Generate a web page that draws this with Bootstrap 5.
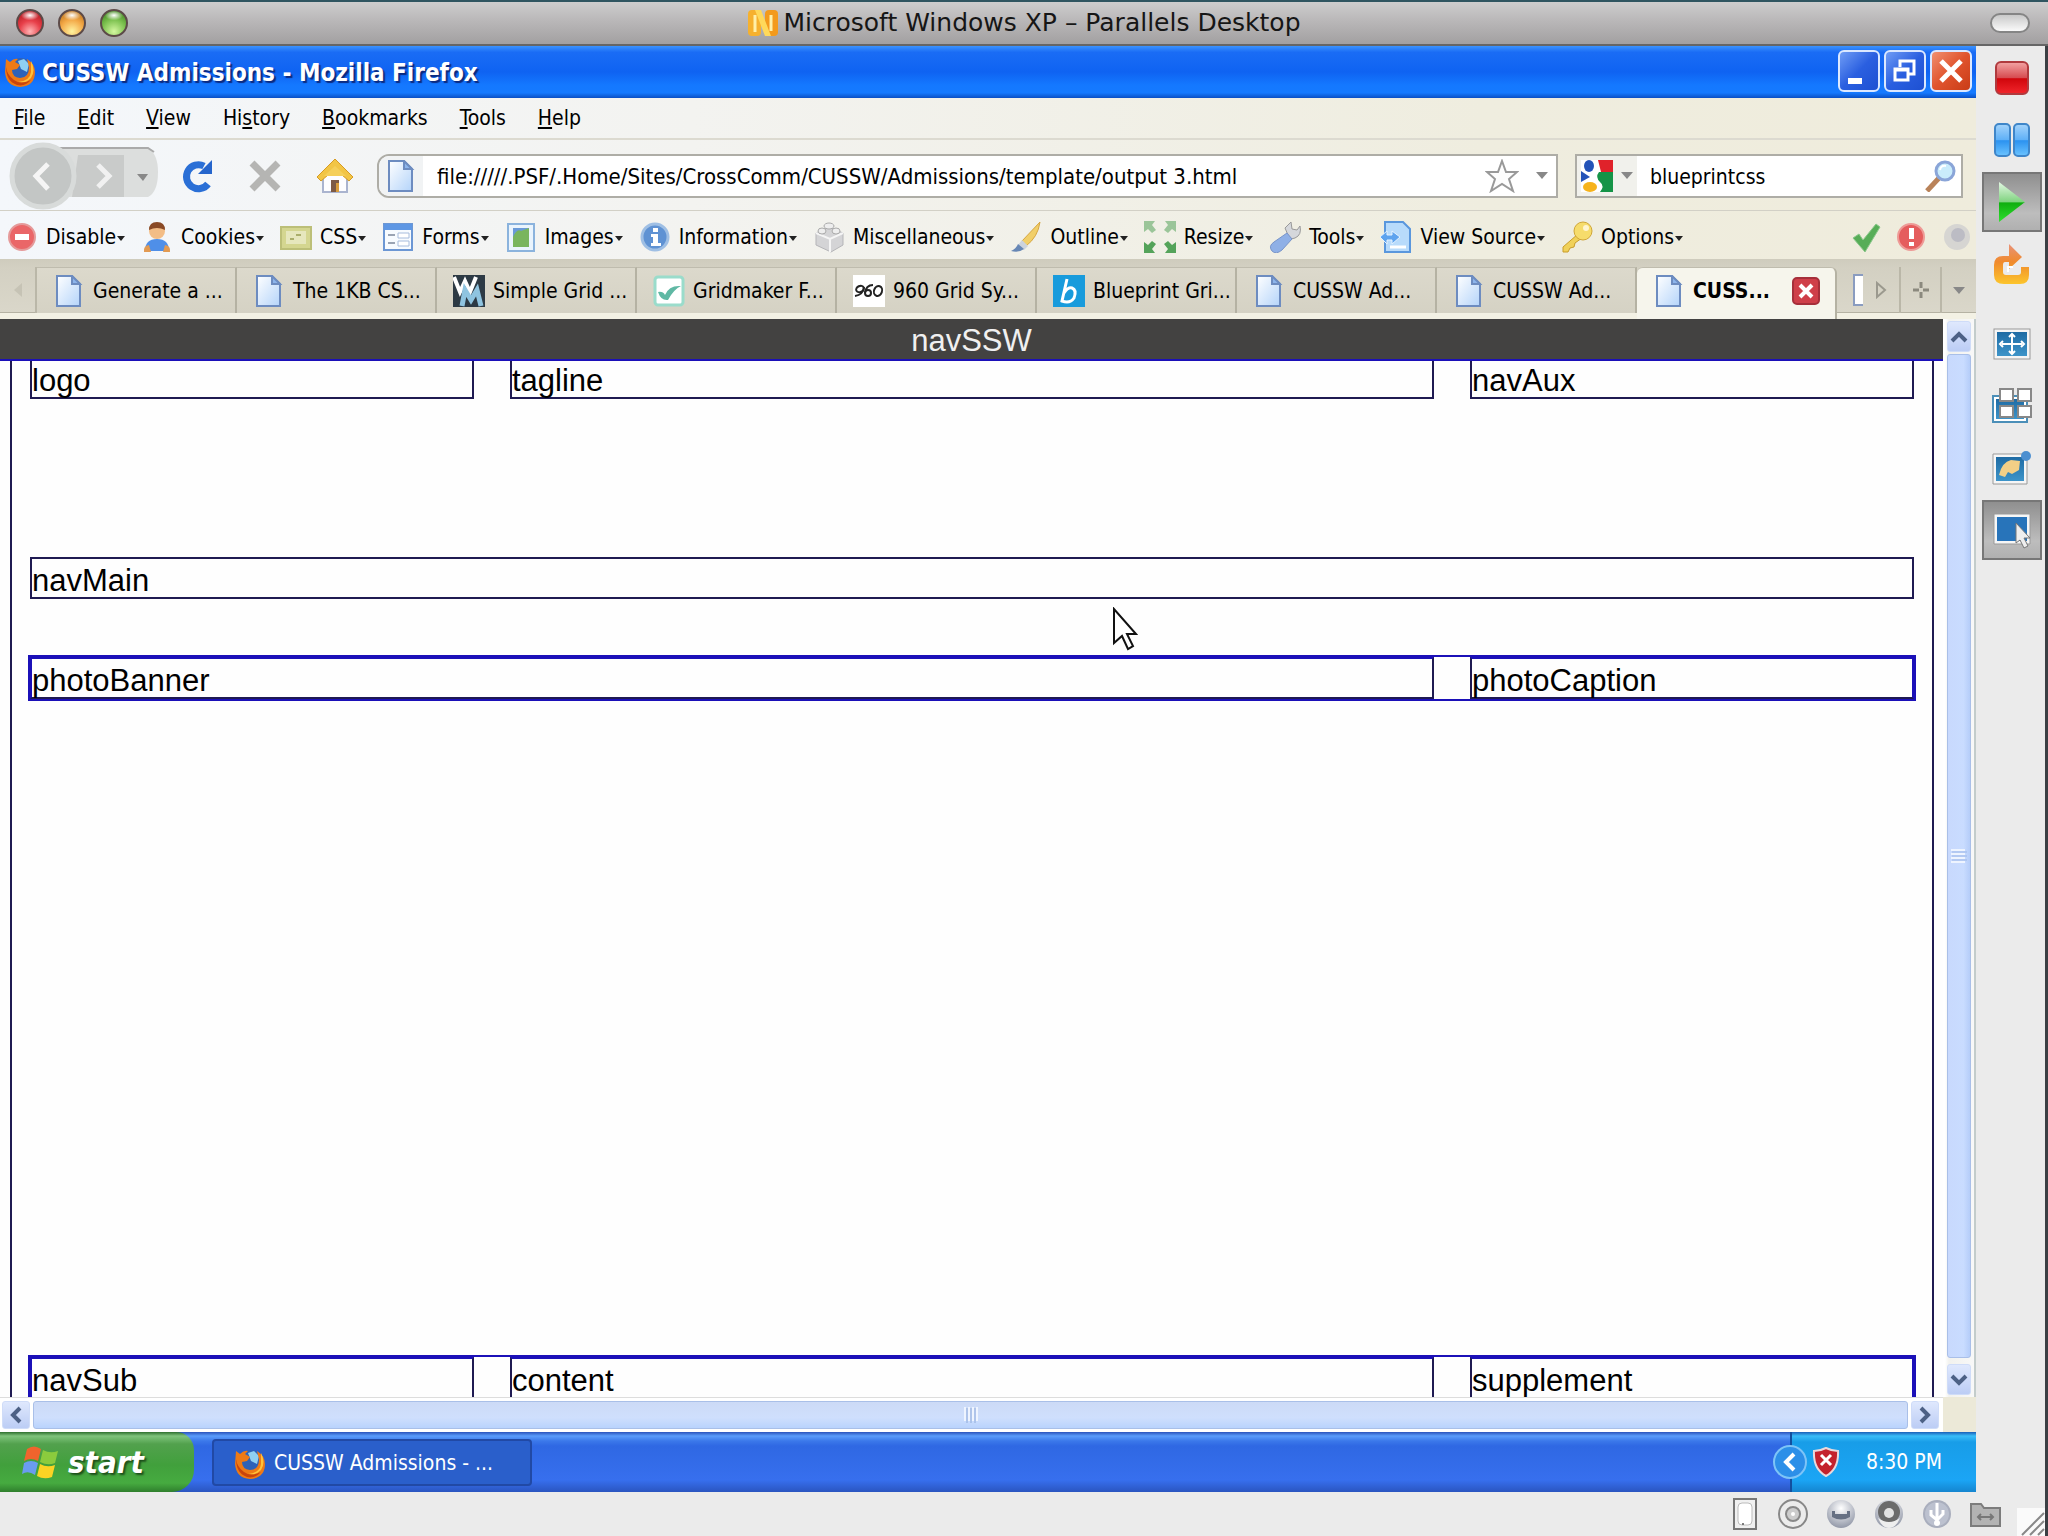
<!DOCTYPE html>
<html lang="en">
<head>
<meta charset="utf-8">
<meta name="viewport" content="width=device-width, initial-scale=1">
<title>Microsoft Windows XP – Parallels Desktop</title>
<link rel="stylesheet" href="https://cdn.jsdelivr.net/npm/bootstrap@5.3.0/dist/css/bootstrap.min.css">
<style>
:root{--ui:"DejaVu Sans Condensed","DejaVu Sans",sans-serif;--blue:#1b10b8;--navy:#1f1a52}
body{font-family:var(--ui);font-size:21px;line-height:24px;color:#000;background:#ebebeb;overflow:hidden}
button{border:0;background:none;padding:0;color:inherit;font:inherit}
svg{display:block;flex:none}
.ico{width:32px;height:32px}
.mac-bar{height:46px;border-top:2px solid #2f5560;border-bottom:2px solid #666;background:linear-gradient(#cdcdcd,#b9b7b8 45%,#a2a0a1);font-family:"DejaVu Sans",sans-serif;font-size:25px;color:#161616}
.lights{padding-left:16px;gap:14px;width:160px}
.lamp{width:28px;height:28px;border-radius:50%;border:2px solid #5c4a48}
.lamp-r{background:radial-gradient(ellipse 9px 5px at 50% 18%,#fff,#fff0),radial-gradient(circle at 50% 85%,#ffb5b5,#e8404a 45%,#a30f14)}
.lamp-y{background:radial-gradient(ellipse 9px 5px at 50% 18%,#fff,#fff0),radial-gradient(circle at 50% 85%,#fff3a0,#f3a846 50%,#a9620f)}
.lamp-g{background:radial-gradient(ellipse 9px 5px at 50% 18%,#fff,#fff0),radial-gradient(circle at 50% 85%,#d4f7a0,#7cc14f 50%,#2f7314)}
.pill{width:40px;height:20px;border:2px solid #858585;border-radius:10px;background:linear-gradient(#c9c9c9,#fafafa);margin-right:18px}
.xp-title{height:52px;padding:0 4px 2px;gap:4px;background:linear-gradient(#3b93ff,#1a6cf5 12%,#0f63f2 50%,#1478ff 75%,#157aff 90%,#0a4fc4);color:#fff;font-weight:bold;font-size:24px;text-shadow:2px 2px 1px #0b2a80}
.xp-title span{padding:4px 0 0 2px}
.cap-btn{width:42px;height:42px;border:2px solid #dbe8ff;border-radius:6px;background:linear-gradient(135deg,#6f9cf5,#2a5fe0 50%,#1d50d2)}
.cap-close{background:linear-gradient(135deg,#f0906f,#e0532d 50%,#c93c17)}
.chrome-bg{background:linear-gradient(90deg,#f4f7fb,#f3f3f0 35%,#efeddf 75%,#efecdc)}
.menu-line{height:42px;padding:0 14px;gap:32px;border-bottom:2px solid #dcdad0}
.nav-line{height:71px;border-bottom:1px solid #d2d0c6;padding:2px 13px 0 0}
.nav-btns{gap:35px;padding-left:21px}
.dev-line{height:49px;padding:5px 4px 0 6px;gap:16px}
.dev-line button{display:flex;align-items:center;gap:8px}
.dev-state{gap:13px}
.tri{width:0;height:0;border:4px solid transparent;border-top:5px solid #222;border-bottom:0;display:inline-block;vertical-align:middle;margin-left:1px}
.tri-lg{border-width:6px;border-top:7px solid #888;border-bottom:0}
.field{height:44px;border:2px solid #aeada6;background:#fff}
.field input{border:0;outline:0;background:none;font:inherit;color:#000;padding:2px 0 0;min-width:0}
.field .addr-text{font-size:22px}
.url-field{border-radius:12px 0 0 12px;margin-left:24px;margin-right:17px}
.url-ico{width:44px;height:100%;background:#f1f3f4;border-radius:10px 0 0 10px;margin-right:14px}
.srch-field{width:388px}
.srch-ico{width:60px;height:100%;background:#f1f1ec;margin-right:13px}
.tab-line{height:60px;background:linear-gradient(#cfccbd,#d3d0c2 8px,#dad7ca);border-bottom:6px solid #f3f1e4;box-shadow:inset 0 -1px #b5b2a3;padding-top:8px}
.tab-end{width:37px;border-right:2px solid #bab7a8;color:#aaa}
.tb{width:200px;gap:8px;padding-left:16px;border-right:2px solid #b5b2a3;border-top:1px solid #bfbcae;background:linear-gradient(#dcd9cc,#d5d2c4);white-space:nowrap}
.tb-on{background:#f6f5ec;height:52px;border-radius:6px 6px 0 0;font-weight:bold;padding-bottom:6px}
.tb-close{margin-left:14px}
.tab-ctl{border-left:2px solid #bab7a8;color:#8b897e}
.viewport{font-family:"Liberation Sans",Arial,sans-serif;font-size:31px;line-height:33px;background:#fefefe}
.ssw{height:42px;padding-top:5px;background:#434241;border-bottom:2px solid var(--blue);color:#f0f0f0}
.sheet{margin:0 9px 0 10px;border:2px solid var(--navy);border-width:0 2px;padding:0 18px}
.cols{display:grid;grid-template-columns:444fr 924fr 444fr;column-gap:36px}
.cols-2{grid-template-columns:1404fr 444fr}
.cell{border:2px solid var(--navy);padding-top:5px}
.head-zone{height:196px}
.head-zone .cell{border-top:0;padding-top:3px}
.main-zone{height:98px}
.wrapbox{border:2px solid var(--blue);margin:0 -2px}
.wrapbox .cell{border-top-color:var(--blue)}
.wrapbox .cell:first-child{border-left-color:var(--blue)}
.wrapbox .cell:last-child{border-right-color:var(--blue)}
.photo-zone{height:700px}
.vbar{width:33px;background:linear-gradient(90deg,#fff 2px,#f2f2ee 6px,#f8f8f8);padding:2px 3px 2px 4px;gap:2px;border-right:2px solid #c3cccb}
.hbar{height:35px;background:#fff;padding:3px 4px 3px 2px;gap:3px;border-top:1px solid #ddd}
.sb-btn{background:linear-gradient(#dfe8fd,#bccdf5);border:1px solid #cfdcf8;border-radius:3px;display:flex;align-items:center;justify-content:center}
.vbar .sb-btn{height:31px}
.hbar .sb-btn{width:28px}
.vthumb{background:linear-gradient(90deg,#c8d9fd,#c9dcff 70%,#b5cdf9);border:1px solid #a9bfe8;border-radius:3px}
.hthumb{background:linear-gradient(#ccdaf6,#cfdffd 60%,#b9d3fd);border:1px solid #a9bfe8;border-radius:3px}
.corner{width:33px;background:#ece9d8}
.taskbar{height:60px;background:linear-gradient(#2a52bb,#5a9cfb 4px,#3b78ea 9px,#2f68e3 14px,#376fee 80%,#2a55c0)}
.start{width:194px;border-radius:0 18px 22px 0;background:linear-gradient(#2e6f2e,#7fc47c 4px,#52a14d 12px,#41a03c 55%,#46ab40 85%,#2f7f2d);color:#fff;font-weight:bold;font-style:italic;font-size:31px;text-shadow:2px 2px 2px #1d4f1b;padding-left:22px;gap:8px}
.task{width:320px;height:47px;margin-left:18px;border:2px solid #2149a5;border-radius:4px;background:#2a5fcb;color:#fff;padding:2px 0 0 20px;gap:8px}
.tray{width:186px;background:linear-gradient(#1a5fb8,#39bdf8 4px,#189de8 10px,#1ba5f5 80%,#1585cf);border-left:2px solid #134f9e;color:#fff;padding-right:34px}
.tray-knob{margin-left:-20px}
.side{width:72px;border-right:3px solid #3b3f44;background:#ebebeb;padding:2px 3px 0 6px;gap:2px}
.side button{height:60px;width:60px;display:flex;align-items:center;justify-content:center}
.pressed{border:2px solid #777!important;background:linear-gradient(#8f8f8f,#bdbdbd 70%,#b0b0b0)!important}
.group-gap{margin-top:18px}
.foot{height:44px;border-right:3px solid #3b3f44;gap:16px}
.pointer{position:absolute;left:57.25%;top:288px;width:26px;height:44px}
</style>
</head>
<body>
<svg width="0" height="0" class="position-absolute" aria-hidden="true">
<defs>
<linearGradient id="gPage" x1="0" y1="0" x2="1" y2="1"><stop offset="0" stop-color="#fff"/><stop offset="1" stop-color="#b4d4fa"/></linearGradient>
<linearGradient id="gRed" x1="0" y1="0" x2="0" y2="1"><stop offset="0" stop-color="#f3a5a5"/><stop offset=".5" stop-color="#d64a4f"/><stop offset=".52" stop-color="#d0060c"/><stop offset="1" stop-color="#f2262c"/></linearGradient>
<linearGradient id="gBlue" x1="0" y1="0" x2="0" y2="1"><stop offset="0" stop-color="#a5d4fb"/><stop offset=".5" stop-color="#5eb0f7"/><stop offset=".52" stop-color="#2b92f0"/><stop offset="1" stop-color="#6cc4ff"/></linearGradient>
<linearGradient id="gGreen" x1="0" y1="0" x2="0" y2="1"><stop offset="0" stop-color="#e4f8e4"/><stop offset=".5" stop-color="#7fd37f"/><stop offset=".52" stop-color="#0fae0f"/><stop offset="1" stop-color="#2fe02f"/></linearGradient>
<linearGradient id="gOrange" x1="0" y1="0" x2="0" y2="1"><stop offset="0" stop-color="#e8937a"/><stop offset=".45" stop-color="#f08a2c"/><stop offset="1" stop-color="#fcc52c"/></linearGradient>
<linearGradient id="gScr" x1="0" y1="0" x2="0" y2="1"><stop offset="0" stop-color="#1e6ba4"/><stop offset="1" stop-color="#3d94c9"/></linearGradient>
<radialGradient id="gBall" cx=".5" cy=".3" r=".7"><stop offset="0" stop-color="#fff"/><stop offset="1" stop-color="#9298a8"/></radialGradient>
<symbol id="page" viewBox="0 0 32 32"><path d="M4 1h15l8 8v22H4z" fill="url(#gPage)" stroke="#6d8cc0" stroke-width="2"/><path d="M19 1v8h8z" fill="#8db5ec" stroke="#6d8cc0" stroke-width="2"/></symbol>
<symbol id="fox" viewBox="0 0 32 32"><circle cx="17" cy="14" r="11" fill="#2e62b8"/><path d="M14 6l6-2 5 5-2 8-6-3z" fill="#8fd0f2"/><path d="M2 4l4 3q4-4 8-3l-3 3 5 3-3 4-5 1q0 7 8 8 9 0 9-11l-2-8q8 5 8 13 0 14-15 15Q2 31 1 17z" fill="#ee7a16"/><path d="M27 6q5 9 0 17-6 6-13 4 12-1 13-10z" fill="#ffc33a"/><path d="M2 12q0 14 11 18 8 2 14-5-10 5-17 0-7-5-8-13z" fill="#c9440c"/></symbol>
</defs></svg>

<div class="d-flex flex-column vh-100">
<header class="mac-bar d-flex align-items-center justify-content-between">
  <div class="lights d-flex">
    <button class="lamp lamp-r" aria-label="Close"></button><button class="lamp lamp-y" aria-label="Minimize"></button><button class="lamp lamp-g" aria-label="Zoom"></button>
  </div>
  <div class="d-flex align-items-center gap-1">
    <svg class="ico" viewBox="0 0 32 32"><rect x="1" y="3" width="13" height="26" rx="4" fill="#f6b12e"/><rect x="18" y="3" width="13" height="26" rx="4" fill="#f39a1c"/><path d="M8 3h6l10 26h-6z" fill="#ffd95a"/><path d="M8 8v17M24 8v16" stroke="#fff0a8" stroke-width="3"/></svg>
    <span>Microsoft Windows XP – Parallels Desktop</span>
  </div>
  <div class="lights d-flex justify-content-end"><button class="pill" aria-label="Toggle toolbar"></button></div>
</header>

<div class="d-flex flex-grow-1 overflow-hidden">
<div class="d-flex flex-column flex-grow-1 overflow-hidden">
  <div class="xp-title d-flex align-items-center">
    <svg class="ico"><use href="#fox"/></svg>
    <span class="flex-grow-1">CUSSW Admissions - Mozilla Firefox</span>
    <button class="cap-btn" aria-label="Minimize"><svg width="38" height="38" viewBox="0 0 38 38"><path d="M8 26h14v6H8z" fill="#fff"/></svg></button>
    <button class="cap-btn" aria-label="Restore"><svg width="38" height="38" viewBox="0 0 38 38" fill="none" stroke="#fff" stroke-width="3"><path d="M14 15V9h14v13h-5"/><path d="M9 17h13v11H9zM9 18h13"/></svg></button>
    <button class="cap-btn cap-close" aria-label="Close"><svg width="38" height="38" viewBox="0 0 38 38"><path d="M9 9l20 20M29 9L9 29" stroke="#fff" stroke-width="5"/></svg></button>
  </div>
  <nav class="menu-line chrome-bg d-flex align-items-center">
    <button><u>F</u>ile</button><button><u>E</u>dit</button><button><u>V</u>iew</button><button>Hi<u>s</u>tory</button><button><u>B</u>ookmarks</button><button><u>T</u>ools</button><button><u>H</u>elp</button>
  </nav>
  <div class="nav-line chrome-bg d-flex align-items-center">
    <button aria-label="Back and forward"><svg width="160" height="68" viewBox="0 0 160 68"><path d="M50 6h98q10 6 10 24 0 20-10 25H50z" fill="#dcdedd"/><path d="M50 6h98l6 4" stroke="#aaa" stroke-width="2" fill="none"/><path d="M78 13h46v42H72z" fill="#c9cbca"/><circle cx="43" cy="34" r="31" fill="#c3c6c5" stroke="#d8dbda" stroke-width="5"/><path d="M48 22L36 34l12 13" stroke="#f5f5f5" stroke-width="5" fill="none"/><path d="M98 23l11 11-11 11" stroke="#f1f1f1" stroke-width="5" fill="none"/><path d="M137 32h11l-5 7z" fill="#888"/></svg></button>
    <div class="nav-btns d-flex align-items-center">
    <button aria-label="Reload"><svg width="32" height="34" viewBox="0 0 32 34"><path d="M27 25A12 12 0 1 1 23 7" fill="none" stroke="#2a6fd6" stroke-width="7"/><path d="M31 1v14H17z" fill="#2565cc"/></svg></button>
    <button aria-label="Stop"><svg width="34" height="34" viewBox="0 0 34 34"><path d="M4 4l26 26M30 4L4 30" stroke="#b5b5b3" stroke-width="7"/></svg></button>
    <button aria-label="Home"><svg width="36" height="36" viewBox="0 0 36 36"><path d="M6 18v16h24V18L18 8z" fill="#fdfdff" stroke="#aab4cf" stroke-width="2"/><path d="M18 1L0 19l4 4L18 11l14 12 4-4z" fill="#f2c545" stroke="#d79b22"/><path d="M18 8L7 18h22z" fill="#f5cf5a"/><path d="M14 22h8v12h-8z" fill="#7d5a45"/><path d="M19 25h3v9h-3z" fill="#d89c3c"/></svg></button>
    </div>
    <div class="field url-field d-flex align-items-center flex-grow-1">
      <label for="addr" class="url-ico d-flex align-items-center justify-content-center"><svg class="ico" aria-label="Address"><use href="#page"/></svg></label>
      <input id="addr" class="addr-text flex-grow-1" value="file://///.PSF/.Home/Sites/CrossComm/CUSSW/Admissions/template/output 3.html">
      <button class="me-3" aria-label="Bookmark this page"><svg width="34" height="34" viewBox="0 0 34 34"><path d="M17 2l4 11h11l-8 7 4 12-11-7-11 7 4-12-8-7h11z" fill="#fdfdfd" stroke="#999" stroke-width="2"/></svg></button>
      <button class="me-2 d-flex" aria-label="Show history"><span class="tri tri-lg"></span></button>
    </div>
    <div class="field srch-field d-flex align-items-center">
      <button class="srch-ico d-flex align-items-center justify-content-center gap-2" aria-label="Search engine"><svg class="ico" viewBox="0 0 32 32"><rect width="32" height="32" fill="#fff"/><path d="M17 0h15v12H20z" fill="#e0222a"/><path d="M18 12h14v20H19q5-6 0-10-5-5-1-10z" fill="#159447"/><ellipse cx="8" cy="6" rx="5" ry="6" fill="#2453b8"/><path d="M0 11l9 6-9 5z" fill="#2453b8"/><ellipse cx="9" cy="27" rx="7" ry="5" fill="#f6b31b"/></svg><span class="tri tri-lg m-0"></span></button>
      <input id="find" class="flex-grow-1" value="blueprintcss" aria-label="Search">
      <button class="me-1" aria-label="Go"><svg class="ico" viewBox="0 0 32 32"><path d="M14 18L2 31" stroke="#b98259" stroke-width="5"/><circle cx="20" cy="11" r="9" fill="#c9ecfb" stroke="#8aa5d8" stroke-width="3"/><path d="M15 10q1-5 6-4" stroke="#fff" stroke-width="2" fill="none"/></svg></button>
    </div>
  </div>
  <div class="dev-line chrome-bg d-flex align-items-center">
    <button><svg class="ico" viewBox="0 0 32 32"><circle cx="16" cy="16" r="13" fill="#ea6668" stroke="#e59a9a" stroke-width="2"/><path d="M9 13h14v6H9z" fill="#fff"/></svg><span>Disable<i class="tri"></i></span></button>
    <button><svg class="ico" viewBox="0 0 32 32"><path d="M4 30q0-12 12-12t12 12z" fill="#4f8fe8"/><path d="M3 31q-1-6 5-7l2 7zM29 31q1-6-5-7l-2 7z" fill="#e29a52"/><circle cx="16" cy="10" r="8" fill="#f3bd86"/><path d="M8 9q0-8 8-8t8 8q-8-4-16 0z" fill="#8a4a26"/></svg><span>Cookies<i class="tri"></i></span></button>
    <button><svg class="ico" viewBox="0 0 32 32"><path d="M1 6h30v22H1z" fill="#d4d690" stroke="#bcbf78" stroke-width="2"/><path d="M6 10h20v13H6z" fill="#e6e7bd"/><path d="M10 18h4m2-4h5" stroke="#aaae6a" stroke-width="2"/></svg><span>CSS<i class="tri"></i></span></button>
    <button><svg class="ico" viewBox="0 0 32 32"><path d="M2 3h28v26H2z" fill="#f7fbff" stroke="#6c97d4" stroke-width="2"/><path d="M2 3h28v6H2z" fill="#5e97e4"/><path d="M6 14h7M6 22h7" stroke="#9aa4b4" stroke-width="2"/><path d="M16 12h11v5H16zM16 20h11v5H16z" fill="#fff" stroke="#a7bcdc"/></svg><span>Forms<i class="tri"></i></span></button>
    <button><svg class="ico" viewBox="0 0 32 32"><path d="M3 3h26v27H3z" fill="#eaf4fd" stroke="#8bb3dd" stroke-width="2"/><path d="M8 7h16v19H8z" fill="#6a9ad8"/><path d="M8 26V16q4-9 8-6l8-3v19z" fill="#79b55e"/></svg><span>Images<i class="tri"></i></span></button>
    <button><svg class="ico" viewBox="0 0 32 32"><circle cx="16" cy="16" r="13" fill="#5f92d3" stroke="#9fbfe4" stroke-width="3"/><path d="M14 7h5v4h-5zM12 13h7v9h3v3H12v-3h2v-6h-2z" fill="#fff"/></svg><span>Information<i class="tri"></i></span></button>
    <button><svg class="ico" viewBox="0 0 32 32"><path d="M16 6l14 6v12l-12 7L3 24V12z" fill="#d4d4d6" stroke="#b5b5b8"/><path d="M3 12l14 6 13-6M17 18v13" stroke="#f5f5f5" stroke-width="2" fill="none"/><ellipse cx="16" cy="5" rx="5" ry="3" fill="#eee" stroke="#aaa"/><ellipse cx="9" cy="10" rx="4" ry="3" fill="#eee" stroke="#aaa"/><ellipse cx="23" cy="10" rx="4" ry="3" fill="#eee" stroke="#aaa"/></svg><span>Miscellaneous<i class="tri"></i></span></button>
    <button><svg class="ico" viewBox="0 0 32 32"><path d="M30 1L12 20l4 5Q28 16 30 1z" fill="#f1cf69" stroke="#d6a640"/><path d="M12 19l6 6-4 4-6-5z" fill="#ccd3dd"/><path d="M8 23l6 5q-5 4-13 2 5-2 7-7z" fill="#6787b5"/></svg><span>Outline<i class="tri"></i></span></button>
    <button><svg class="ico" viewBox="0 0 32 32" fill="#7db77f"><path d="M0 0h11L8 4l4 5-4 3-4-4-4 3zM32 0H21l3 4-4 5 4 3 4-4 4 3z" opacity=".75"/><path d="M0 32h11l-3-4 4-5-4-3-4 4-4-3zM32 32H21l3-4-4-5 4-3 4 4 4-3z" fill="#54a35a"/></svg><span>Resize<i class="tri"></i></span></button>
    <button><svg class="ico" viewBox="0 0 32 32"><path d="M19 14l-3-7 6-6 1 7 5 1 3-4q2 9-5 12l-4 1z" fill="#d5d7db" stroke="#999"/><path d="M18 12l5 6-10 11q-6 5-10 1-4-5 2-9z" fill="#8fb0e6" stroke="#7894c9"/></svg><span>Tools<i class="tri"></i></span></button>
    <button><svg class="ico" viewBox="0 0 32 32"><path d="M5 1h18l7 7v23H5z" fill="#b8dbfb" stroke="#5a97dd" stroke-width="2"/><path d="M10 26h16" stroke="#fff" stroke-width="3"/><path d="M0 16l7-6v4h5v-4l8 6-8 7v-4H7v4z" fill="#5ea3ee" stroke="#e4f2ff"/></svg><span>View Source<i class="tri"></i></span></button>
    <button><svg class="ico" viewBox="0 0 32 32"><path d="M17 13L2 26v5h5l2-4 4-1 1-4 7-5z" fill="#f0d159" stroke="#c99d2b"/><circle cx="22" cy="10" r="9" fill="#f6dc6b" stroke="#d0a637"/><circle cx="25" cy="7" r="3" fill="#fff5cf"/></svg><span>Options<i class="tri"></i></span></button>
    <div class="dev-state d-flex ms-auto">
    <svg class="ico" viewBox="0 0 32 32"><path d="M3 17l6-4 4 6L26 3l4 3-15 25z" fill="#57ad57" stroke="#8bc78b"/></svg>
    <svg class="ico" viewBox="0 0 32 32"><circle cx="16" cy="16" r="13" fill="#e55d5d" stroke="#ee9a96" stroke-width="2"/><path d="M14 7h5v11h-5zM14 21h5v4h-5z" fill="#fff"/></svg>
    <svg class="ico" viewBox="0 0 32 32"><circle cx="17" cy="16" r="13" fill="#d6d5d2"/><circle cx="18" cy="14" r="7" fill="#bcbcc4"/></svg>
    </div>
  </div>
  <nav class="tab-line d-flex">
    <button class="tab-end d-flex align-items-center justify-content-center" aria-label="Scroll tabs left"><svg width="12" height="16" viewBox="0 0 12 16"><path d="M10 1v14L2 8z" fill="#c6c3b5"/></svg></button>
    <button class="tb d-flex align-items-center"><svg class="ico"><use href="#page"/></svg>Generate a ...</button>
    <button class="tb d-flex align-items-center"><svg class="ico"><use href="#page"/></svg>The 1KB CS...</button>
    <button class="tb d-flex align-items-center"><svg class="ico" viewBox="0 0 32 32"><path d="M0 0h32v32H0z" fill="#2d3a44"/><path d="M1 2l6 15 5-11 5 11 6-15" stroke="#fff" stroke-width="4" fill="none"/><path d="M9 31l3-16 6 10 6-10 4 16" stroke="#8fc4e0" stroke-width="5" fill="none"/></svg>Simple Grid ...</button>
    <button class="tb d-flex align-items-center"><svg class="ico" viewBox="0 0 32 32"><rect x="2" y="2" width="28" height="28" rx="3" fill="#fff" stroke="#9adccb" stroke-width="3"/><path d="M5 17q5-1 7 3 4-10 16-9-7 3-13 14-7 1-10-8z" fill="#5fb8a4"/></svg>Gridmaker F...</button>
    <button class="tb d-flex align-items-center"><svg class="ico" viewBox="0 0 32 32"><path d="M0 0h32v32H0z" fill="#fff"/><g fill="none" stroke="#222" stroke-width="2"><ellipse cx="7" cy="14" rx="4" ry="3" transform="rotate(-25 7 14)"/><path d="M11 12q-1 8-9 9"/><ellipse cx="15" cy="18" rx="3" ry="3"/><path d="M12 18q1-8 8-8"/><ellipse cx="25" cy="16" rx="4" ry="5" transform="rotate(20 25 16)"/></g></svg>960 Grid Sy...</button>
    <button class="tb d-flex align-items-center"><svg class="ico" viewBox="0 0 32 32"><path d="M0 0h32v32H0z" fill="#189bdc"/><path d="M14 4l-5 22q8 3 12-3 3-8-2-10-4-1-8 5" fill="none" stroke="#fff" stroke-width="3"/></svg>Blueprint Gri...</button>
    <button class="tb d-flex align-items-center"><svg class="ico"><use href="#page"/></svg>CUSSW Ad...</button>
    <button class="tb d-flex align-items-center"><svg class="ico"><use href="#page"/></svg>CUSSW Ad...</button>
    <button class="tb tb-on d-flex align-items-center"><svg class="ico"><use href="#page"/></svg>CUSS...<svg class="tb-close" width="28" height="28" viewBox="0 0 28 28" aria-label="Close tab"><rect x="1" y="1" width="26" height="26" rx="4" fill="#cf3f49" stroke="#a62f3a" stroke-width="2"/><path d="M8 8l12 12M20 8L8 20" stroke="#fff" stroke-width="4"/></svg></button>
    <span class="d-flex align-items-center ps-3"><svg width="10" height="32" viewBox="0 0 10 32"><path d="M10 1H1v30h9" fill="#fff" stroke="#8a9cc0" stroke-width="2"/></svg></span>
    <button class="flex-fill d-flex align-items-center justify-content-center" aria-label="Scroll tabs right"><svg width="14" height="18" viewBox="0 0 14 18"><path d="M3 2l8 7-8 7z" fill="none" stroke="#9b998e" stroke-width="2"/></svg></button>
    <button class="tab-ctl flex-fill d-flex align-items-center justify-content-center" aria-label="New tab"><svg width="18" height="18" viewBox="0 0 18 18"><path d="M9 1v16M1 9h16" stroke="#8b897e" stroke-width="3" stroke-dasharray="6 4"/></svg></button>
    <button class="tab-ctl flex-fill d-flex align-items-center justify-content-center" aria-label="List tabs"><span class="tri tri-lg m-0"></span></button>
  </nav>

  <div class="d-flex flex-grow-1 overflow-hidden">
    <main class="viewport flex-grow-1 overflow-hidden position-relative">
      <div class="ssw text-center">navSSW</div>
      <div class="sheet">
        <div class="head-zone"><div class="cols"><div class="cell">logo</div><div class="cell">tagline</div><div class="cell">navAux</div></div></div>
        <div class="main-zone"><div class="cell">navMain</div></div>
        <div class="photo-zone"><div class="wrapbox cols cols-2"><div class="cell">photoBanner</div><div class="cell">photoCaption</div></div></div>
        <div class="wrapbox cols"><div class="cell">navSub</div><div class="cell">content</div><div class="cell">supplement</div></div>
      </div>
      <svg class="pointer" viewBox="0 0 26 44"><path d="M2 2v34l8-7 6 13 5-3-6-12h9z" fill="#fff" stroke="#111" stroke-width="2"/></svg>
    </main>
    <div class="vbar d-flex flex-column" aria-label="Vertical scroll bar">
      <button class="sb-btn" aria-label="Scroll up"><svg width="18" height="12" viewBox="0 0 18 12"><path d="M2 10l7-7 7 7" fill="none" stroke="#4d6185" stroke-width="4"/></svg></button>
      <div class="vthumb flex-grow-1 d-flex align-items-center justify-content-center"><svg width="16" height="16" viewBox="0 0 16 16"><path d="M0 2h14M0 6h14M0 10h14M0 14h14" stroke="#eef4ff" stroke-width="2"/><path d="M1 4h15M1 8h15M1 12h15" stroke="#9db7e6" stroke-width="1"/></svg></div>
      <button class="sb-btn mt-1" aria-label="Scroll down"><svg width="18" height="12" viewBox="0 0 18 12"><path d="M2 2l7 7 7-7" fill="none" stroke="#4d6185" stroke-width="4"/></svg></button>
    </div>
  </div>
  <div class="d-flex">
    <div class="hbar d-flex flex-grow-1" aria-label="Horizontal scroll bar">
      <button class="sb-btn" aria-label="Scroll left"><svg width="12" height="18" viewBox="0 0 12 18"><path d="M10 2L3 9l7 7" fill="none" stroke="#4d6185" stroke-width="4"/></svg></button>
      <div class="hthumb flex-grow-1 d-flex align-items-center justify-content-center"><svg width="16" height="16" viewBox="0 0 16 16"><path d="M2 0v14M6 0v14M10 0v14M14 0v14" stroke="#eef4ff" stroke-width="2"/><path d="M4 1v15M8 1v15M12 1v15" stroke="#8faad9" stroke-width="1"/></svg></div>
      <button class="sb-btn" aria-label="Scroll right"><svg width="12" height="18" viewBox="0 0 12 18"><path d="M2 2l7 7-7 7" fill="none" stroke="#4d6185" stroke-width="4"/></svg></button>
    </div>
    <div class="corner"></div>
  </div>
  <footer class="taskbar d-flex align-items-center">
    <button class="start d-flex align-items-center h-100"><svg width="38" height="36" viewBox="0 0 38 36"><path d="M5 5q7-5 14 0l-3 12q-7-4-14 0z" fill="#f0642d"/><path d="M21 6q7 4 15 1l-3 12q-7 3-15-1z" fill="#8bcb3d"/><path d="M2 19q7-4 14 0l-3 12q-7-5-13-1z" fill="#6a9cf0"/><path d="M18 20q7 4 15 1l-3 12q-8 3-15-1z" fill="#fbd324"/></svg>start</button>
    <button class="task d-flex align-items-center"><svg class="ico"><use href="#fox"/></svg>CUSSW Admissions - ...</button>
    <span class="flex-grow-1"></span>
    <div class="tray d-flex align-items-center h-100">
      <button class="tray-knob" aria-label="Show hidden icons"><svg width="36" height="36" viewBox="0 0 36 36"><circle cx="18" cy="18" r="16" fill="#2c8fe8" stroke="#7dc4f7" stroke-width="2"/><path d="M22 10l-8 8 8 8" fill="none" stroke="#fff" stroke-width="4"/></svg></button>
      <svg class="ms-1" width="28" height="30" viewBox="0 0 28 30"><path d="M14 1q6 3 12 3 1 18-12 25Q1 22 2 4q6 0 12-3z" fill="#c4222d" stroke="#e8d9dc" stroke-width="2"/><path d="M9 8l10 10M19 8L9 18" stroke="#fff" stroke-width="3"/></svg>
      <span class="ms-auto text-nowrap">8:30 PM</span>
    </div>
  </footer>
</div>

<aside class="side d-flex flex-column flex-shrink-0">
  <button aria-label="Stop"><svg width="34" height="34" viewBox="0 0 34 34"><rect x="1" y="1" width="32" height="32" rx="5" fill="url(#gRed)" stroke="#b03a3e" stroke-width="2"/></svg></button>
  <button aria-label="Pause"><svg width="36" height="34" viewBox="0 0 36 34"><rect x="1" y="1" width="15" height="32" rx="4" fill="url(#gBlue)" stroke="#3f86c9" stroke-width="2"/><rect x="20" y="1" width="15" height="32" rx="4" fill="url(#gBlue)" stroke="#3f86c9" stroke-width="2"/></svg></button>
  <button class="pressed" aria-label="Play"><svg width="30" height="42" viewBox="0 0 30 42"><path d="M2 1l26 20L2 41z" fill="url(#gGreen)"/></svg></button>
  <button aria-label="Restart"><svg width="36" height="40" viewBox="0 0 36 40"><path d="M15 0l13 13-13 12v-7h-4q-2 0-2 3v7q0 3 3 3h12q3 0 3-3v-5h8v8q0 9-9 9H10q-10 0-10-9V21q0-9 9-9h6z" fill="url(#gOrange)"/><path d="M14 28v-5h5" fill="none" stroke="#fff" stroke-width="2"/></svg></button>
  <button class="group-gap" aria-label="Full screen"><svg width="38" height="32" viewBox="0 0 38 32"><rect x="1" y="1" width="36" height="30" fill="#f5f5f5" stroke="#999" stroke-width="1"/><rect x="4" y="4" width="30" height="24" fill="url(#gScr)"/><path d="M19 7v18M9 16h20M16 9l3-3 3 3M16 23l3 3 3-3M10 13l-3 3 3 3M28 13l3 3-3 3" stroke="#fff" stroke-width="2" fill="none"/></svg></button>
  <button aria-label="Coherence"><svg width="40" height="36" viewBox="0 0 40 36"><path d="M1 8h34v26H1z" fill="#fff" stroke="#4b8fb8" stroke-width="2"/><path d="M4 11h28v20H4z" fill="url(#gScr)"/><path d="M8 1h13v12H8zM26 1h13v12H26zM8 18h13v11H8zM26 18h13v11H26z" fill="#fff" stroke="#888" stroke-width="2"/></svg></button>
  <button aria-label="Modality"><svg width="40" height="36" viewBox="0 0 40 36"><path d="M1 4h34v30H1z" fill="#f6f6f6" stroke="#999"/><path d="M4 7h28v24H4z" fill="url(#gScr)"/><path d="M7 25q3-13 12-15l9 1-1 9-7 4-4-2-3 5z" fill="#f3cf86"/><circle cx="34" cy="6" r="5" fill="#4c8fd0"/></svg></button>
  <button class="pressed" aria-label="Capture pointer"><svg width="38" height="38" viewBox="0 0 38 38"><path d="M1 3h36v30H1z" fill="#f6f6f6" stroke="#999"/><path d="M4 6h30v24H4z" fill="#2874ba"/><path d="M23 12v20l4-3 4 8 4-2-4-8h6z" fill="#eee" stroke="#777"/></svg></button>
</aside>
</div>

<div class="foot d-flex align-items-center justify-content-end">
  <svg class="ico" viewBox="0 0 32 32"><rect x="5" y="1" width="22" height="30" fill="#f0f0f0" stroke="#777" stroke-width="2"/><rect x="9" y="5" width="14" height="22" rx="4" fill="#fff" stroke="#bbb"/><circle cx="14" cy="26" r="1" fill="#555"/></svg>
  <svg class="ico" viewBox="0 0 32 32"><circle cx="16" cy="16" r="14" fill="#ececec" stroke="#888" stroke-width="2"/><circle cx="16" cy="16" r="7" fill="#ccc" stroke="#888" stroke-width="2"/><circle cx="16" cy="16" r="2" fill="#fff"/></svg>
  <svg class="ico" viewBox="0 0 32 32"><circle cx="16" cy="16" r="14" fill="url(#gBall)"/><path d="M7 19v-6h3v3h12v-3h3v6q-9 5-18 0z" fill="#667083"/></svg>
  <svg class="ico" viewBox="0 0 32 32"><circle cx="16" cy="16" r="14" fill="url(#gBall)"/><circle cx="16" cy="14" r="11" fill="#6b6b6b"/><circle cx="16" cy="15" r="5" fill="#e2e2e2"/><path d="M5 20q11 8 22 0-4 10-11 10T5 20z" fill="#eee"/></svg>
  <svg class="ico" viewBox="0 0 32 32"><circle cx="16" cy="16" r="14" fill="#a9aebd"/><circle cx="16" cy="16" r="12" fill="#bcc1cf"/><path d="M16 5v20M10 12v5l6 5 6-6v-4" stroke="#fff" stroke-width="3" fill="none"/><circle cx="16" cy="25" r="3" fill="#fff"/></svg>
  <svg class="ico" viewBox="0 0 32 32"><path d="M2 6h10l3 4h16v18H2z" fill="#b3b3b3" stroke="#7c7c7c" stroke-width="2"/><path d="M9 19h15M12 16l-3 3 3 3M21 16l3 3-3 3" stroke="#777" stroke-width="2" fill="none"/></svg>
  <svg width="28" height="28" viewBox="0 0 28 28" class="align-self-end"><path d="M0 0h28v28H0z" fill="#fafafa"/><path d="M5 27L27 5M13 27l14-14M21 27l6-6" stroke="#888" stroke-width="2"/></svg>
</div>
</div>
<script src="https://cdn.jsdelivr.net/npm/bootstrap@5.3.0/dist/js/bootstrap.bundle.min.js"></script>
</body>
</html>
